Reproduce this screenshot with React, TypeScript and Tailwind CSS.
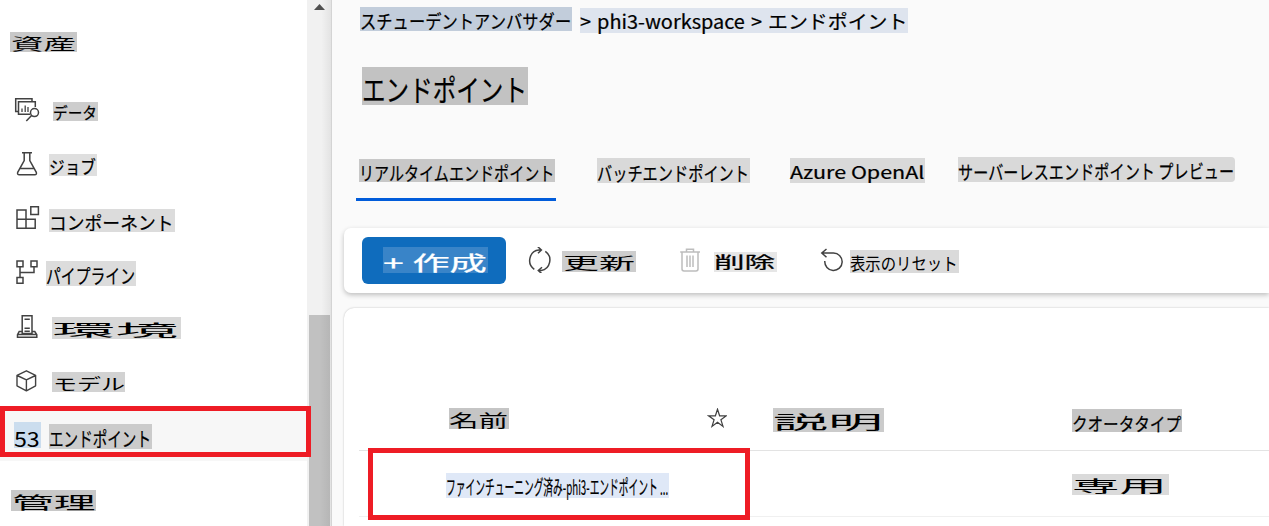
import { useLayoutEffect, useRef, useState, type ReactNode } from "react";

/** A highlighted box whose text is stretched to the width of the box. */
function Label({ children, box, text, thin = false }: { children: string; box: string; text: string; thin?: boolean }) {
  const outer = useRef<HTMLSpanElement>(null);
  const inner = useRef<HTMLSpanElement>(null);
  const [scale, setScale] = useState(1);
  useLayoutEffect(() => {
    if (outer.current && inner.current) {
      setScale((outer.current.clientWidth - 1) / inner.current.offsetWidth);
    }
  }, [children]);
  const stroke = thin ? "" : "[-webkit-text-stroke:0.22px_currentColor]";
  return (
    <span ref={outer} className={`flex shrink-0 items-start ${box}`}>
      <span
        ref={inner}
        className={`block shrink-0 origin-left whitespace-nowrap leading-none ${stroke} ${text}`}
        style={{ transform: `scaleX(${scale})` }}
      >
        {children}
      </span>
    </span>
  );
}

function Icon({ children, className }: { children: ReactNode; className: string }) {
  return (
    <svg viewBox="0 0 26 26" fill="none" stroke="currentColor" strokeWidth="1.5" className={`h-[26px] w-[26px] shrink-0 ${className}`}>
      {children}
    </svg>
  );
}

function NavRow({ icon, children, className = "h-[54px]" }: { icon: ReactNode; children: ReactNode; className?: string }) {
  return (
    <div className={`flex shrink-0 items-start pl-[14px] ${className}`}>
      {icon}
      {children}
    </div>
  );
}

function Sidebar() {
  return (
    <nav className="flex w-[307px] shrink-0 flex-col text-[#424242]">
      <div className="h-[84px] shrink-0 pl-[10px] pt-[32px]">
        <Label thin box="h-[20px] w-[67px] bg-[#c8c8c8] pl-px text-black" text="mt-[3px] text-[16.3px]">資産</Label>
      </div>
      <NavRow
        icon={
          <Icon className="mt-[13px]">
            <path d="M4 14.5H1.7V1.7H18V4" />
            <path d="M16 17.2H4.5V4.8H21.3V10" />
            <path d="M8 11.5V15M11.2 8.5V15M14 10V15" strokeWidth="1.3" />
            <circle cx="20.5" cy="15.6" r="4" />
            <path d="M17.6 18.5L12.3 24" />
          </Icon>
        }
      >
        <Label box="ml-[13px] mt-[18px] h-[19px] w-[45px] bg-[#cdcdcd] text-black" text="mt-[2.2px] text-[16px]">データ</Label>
      </NavRow>
      <NavRow
        icon={
          <Icon className="mt-[13px]">
            <path d="M8 1.7H18M10.2 1.7V9.5L3.7 21.3Q3 23.8 5.3 23.8H20.7Q23 23.8 22.3 21.3L15.8 9.5V1.7M6.2 17.4H19.8" />
          </Icon>
        }
      >
        <Label box="ml-[9px] mt-[16px] h-[22px] w-[48px] bg-[#dfdfdf] text-black" text="mt-[3.1px] text-[18px]">ジョブ</Label>
      </NavRow>
      <NavRow
        icon={
          <Icon className="mt-[13px]">
            <path d="M3 5H12V23.2H3ZM3 14.2H21.2V23.2H12M16.8 1.8H24.4V9.4H16.8Z" />
          </Icon>
        }
      >
        <Label box="ml-[9px] mt-[17px] h-[23px] w-[126px] bg-[#dcdcdc] text-black" text="mt-[4.2px] text-[18.5px]">コンポーネント</Label>
      </NavRow>
      <NavRow
        icon={
          <Icon className="mt-[13px]">
            <path d="M3 2H9V7.8H3ZM17 2H23V7.8H17ZM3 18.5H9V24.3H3ZM6 7.8V18.5M6 13.5H20V7.8" />
          </Icon>
        }
      >
        <Label box="ml-[6px] mt-[15px] h-[25px] w-[90px] bg-[#dcdcdc] text-black" text="mt-[4.6px] text-[20px]">パイプライン</Label>
      </NavRow>
      <NavRow
        icon={
          <Icon className="mt-[14px]">
            <path d="M8.2 19.5V1.8H18V19.5ZM10.5 5.3H15.8M10.5 14.2H15.8M10.5 17.3H15.8" />
            <path d="M8 17.5H5.2L3.5 20.8V23.2H22.8V20.8L20.8 17.5H18M3.5 20.5H22.8" />
          </Icon>
        }
      >
        <Label thin box="ml-[12px] mt-[17px] h-[22px] w-[129px] bg-[#d8d8d8] text-black" text="mt-[3.8px] text-[16.3px]">環境</Label>
      </NavRow>
      <NavRow
        className="h-[52px]"
        icon={
          <Icon className="mt-[14px]">
            <path d="M12.4 2.8L21.6 7.3V17.8L12.4 22.8L3 17.8V7.3ZM3.2 7.5L12.4 11.8L21.5 7.5M12.4 11.8V22.5" strokeLinejoin="round" strokeWidth="1.4" />
          </Icon>
        }
      >
        <Label thin box="ml-[12px] mt-[18px] h-[20px] w-[73px] bg-[#d2d2d2] pl-px text-black" text="mt-[3.2px] text-[16px]">モデル</Label>
      </NavRow>
      <NavRow
        className="relative h-[55px] bg-[#f7f7f7]"
        icon={<Label thin box="mt-[16px] h-[26px] w-[27px] bg-[#cbddee] text-black" text="mt-[5.8px] text-[20.5px]">53</Label>}
      >
        <Label box="ml-[8px] mt-[18px] h-[25px] w-[103px] bg-[#cbcbcb] text-black" text="mt-[4.8px] text-[20px]">エンドポイント</Label>
        <div className="absolute left-0 top-0 z-10 h-[51px] w-[311px] border-[5px] border-[#ee1c25]" />
      </NavRow>
      <div className="shrink-0 pl-[11px] pt-[29px]">
        <Label thin box="h-[21px] w-[85px] bg-[#c8c8c8] pl-px text-black" text="mt-[3.4px] text-[17.4px]">管理</Label>
      </div>
    </nav>
  );
}

function Scrollbar() {
  return (
    <div className="flex w-[25px] shrink-0 flex-col border-r border-[#d4d4d4] bg-linear-to-r from-[#f1f1f1] from-60% to-[#e3e3e3]">
      <svg viewBox="0 0 11 6" className="ml-[7px] mt-[4px] h-[6px] w-[11px] shrink-0 fill-[#505050]">
        <path d="M5.5 0L11 6H0Z" />
      </svg>
      <div className="ml-[2px] mt-[305px] w-[21px] grow bg-linear-to-r from-[#c1c1c1] from-50% to-[#b6b6b6]" />
    </div>
  );
}

function Header() {
  return (
    <header className="flex h-[228px] shrink-0 flex-col">
      <div className="flex h-[67px] shrink-0 items-start pl-[28px] pt-[7px]">
        <Label box="h-[24px] w-[212px] bg-[#c2cddb]" text="mt-[4.1px] text-[19px]">スチューデントアンバサダー</Label>
        <Label box="ml-[8px] mt-px h-[25px] w-[328px] bg-[#dee4ee]" text="mt-[3.2px] text-[19px] [word-spacing:1.5px]">{"> phi3-workspace > エンドポイント"}</Label>
      </div>
      <h1 className="h-[90px] shrink-0 pl-[30px]">
        <Label box="h-[38px] w-[166px] bg-[#c2c2c2]" text="mt-[6.4px] text-[30px]">エンドポイント</Label>
      </h1>
      <div className="flex items-start pl-[24px]">
        <div className="h-[44px] w-[200px] border-b-[3px] border-[#015cda] pl-[3px] pt-[2px]">
          <Label box="h-[23px] w-[196px] bg-[#c8c8c8]" text="mt-[4px] text-[19px]">リアルタイムエンドポイント</Label>
        </div>
        <Label box="ml-[41px] mt-px h-[25px] w-[153px] bg-[#d9d9d9]" text="mt-[5px] text-[19.5px]">バッチエンドポイント</Label>
        <Label box="ml-[40px] mt-px h-[25px] w-[135px] bg-[#d9d9d9]" text="mt-[4.8px] text-[17px]">Azure OpenAl</Label>
        <Label box="ml-[33px] h-[25px] w-[277px] rounded-r bg-[#d9d9d9]" text="mt-[5px] text-[19.5px] -rotate-[0.3deg]">サーバーレスエンドポイント プレビュー</Label>
      </div>
    </header>
  );
}

function Toolbar() {
  return (
    <div className="ml-[12px] flex h-[65px] shrink-0 items-start rounded-l-[7px] bg-white pl-[18px] pt-[9px] text-[#424242] shadow-[0_2px_5px_rgba(0,0,0,0.24)]">
      <button className="flex h-[47px] w-[144px] shrink-0 items-start rounded-[6px] bg-[#0f6cbd] pl-[21px] pt-[10px] text-white">
        <Label box="h-[26px] w-[105px] bg-[#3984c8]" text="mt-[4.5px] text-[20.5px]">+ 作成</Label>
      </button>
      <Icon className="ml-[21px] mt-[10px]">
        <path d="M7.3 22.3A10 10.5 0 0 1 12 3H14.3M10.8 -.3L14.4 3L11 6.3" />
        <path d="M18.3 4.3A10 10.5 0 0 1 14.2 23.5H11.5M15 20.2L11.3 23.5L14.8 26.7" />
      </Icon>
      <Label thin box="ml-[9px] mt-[14px] h-[21px] w-[74px] bg-[#cdcdcd] pl-px text-black" text="mt-[3.3px] text-[16.3px]">更新</Label>
      <Icon className="ml-[41px] mt-[10px] text-[#bdbdbd]">
        <path d="M3.2 4.9H23M9.5 4.7V2.2H16.5V4.7M5 5V22Q5 23.9 7 23.9H19Q21 23.9 21 22V5M10 8.5V20M13 8.5V20M16 8.5V20" />
      </Icon>
      <Label box="ml-[11px] mt-[15px] h-[20px] w-[63px] bg-[#e6e6e6] text-black" text="mt-[2.4px] text-[15.8px]">削除</Label>
      <Icon className="ml-[43px] mt-[10px]">
        <path d="M6.5 2L1.8 6L6.5 10.3M2 6H13.5A8.7 8.7 0 1 1 4.8 14" />
      </Icon>
      <Label thin box="ml-[4px] mt-[13px] h-[23px] w-[109px] bg-[#dadada] text-black" text="mt-[4.4px] text-[17.5px]">表示のリセット</Label>
    </div>
  );
}

function EndpointTable() {
  return (
    <section className="ml-[12px] mt-[15px] flex grow flex-col rounded-tl-[10px] bg-white pl-[15px] pt-[100px] shadow-[0_0_2px_rgba(0,0,0,0.25)]">
      <div className="grid h-[43px] shrink-0 grid-cols-[324px_389px_1fr] items-start border-b border-[#e3e3e3]">
        <div className="flex items-start pl-[90px]">
          <Label thin box="h-[21px] w-[60px] bg-[#c5c5c5]" text="mt-[3.8px] text-[16.5px]">名前</Label>
        </div>
        <div className="flex items-start pl-[24px]">
          <svg viewBox="0 0 20 20" className="h-[20px] w-[20px] shrink-0 fill-none stroke-[#404040] stroke-[1.2]">
            <path d="M10.5 1.2L12.6 7.8H19.4L13.9 11.8L16 18.4L10.5 14.3L5 18.4L7.1 11.8L1.6 7.8H8.4Z" />
          </svg>
          <Label thin box="ml-[46px] h-[24px] w-[111px] bg-[#cbcbcb]" text="mt-[4.3px] text-[18.5px]">説明</Label>
        </div>
        <Label box="mt-px h-[23px] w-[110px] bg-[#c5c5c5]" text="mt-[3.6px] text-[19px] rotate-[0.3deg]">クオータタイプ</Label>
      </div>
      <div className="relative grid h-[66px] shrink-0 grid-cols-[713px_1fr] items-start border-b border-[#f0f0f0] pt-[22px]">
        <div className="pl-[87px]">
          <Label box="h-[25px] w-[223px] bg-[#dfe8f7]" text="mt-[4px] text-[20px]">ファインチューニング済み-phi3-エンドポイント ...</Label>
        </div>
        <Label thin box="mt-px h-[21px] w-[97px] bg-[#dadada]" text="mt-[3.2px] text-[16.3px]">専用</Label>
        <div className="absolute -top-[3px] left-[9px] h-[72px] w-[382px] border-[5px] border-[#ee1c25]" />
      </div>
    </section>
  );
}

export default function App() {
  return (
    <div className="flex h-[526px] w-[1269px] overflow-hidden bg-white font-['Noto_Sans_CJK_JP',sans-serif] text-black">
      <Sidebar />
      <Scrollbar />
      <main className="flex min-w-0 grow flex-col bg-[#fafafa]">
        <Header />
        <Toolbar />
        <EndpointTable />
      </main>
    </div>
  );
}
